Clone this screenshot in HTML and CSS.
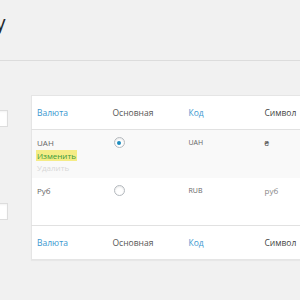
FILE: index.html
```html
<!DOCTYPE html>
<html lang="ru">
<head>
<meta charset="utf-8">
<link rel="stylesheet" href="styles.css">
</head>
<body>
<div class="head">
  <h1 class="title">Валюту</h1>
</div>
<div class="main">
  <div class="side">
    <div class="field"></div>
    <div class="field second"></div>
  </div>
  <table class="list">
    <colgroup>
      <col class="c">
      <col class="c">
      <col class="c">
      <col>
    </colgroup>
    <thead>
      <tr>
        <th class="link">Валюта</th>
        <th>Основная</th>
        <th class="link">Код</th>
        <th class="dark">Символ</th>
      </tr>
    </thead>
    <tbody>
      <tr class="alt">
        <td class="name">UAH
          <div class="actions">
            <span class="edit">Изменить</span>
            <span class="del">Удалить</span>
          </div>
        </td>
        <td><span class="radio checked"></span></td>
        <td class="code">UAH</td>
        <td class="sym">₴</td>
      </tr>
      <tr class="r2">
        <td class="name">Руб</td>
        <td><span class="radio"></span></td>
        <td class="code">RUB</td>
        <td class="sym light">руб</td>
      </tr>
    </tbody>
    <tfoot>
      <tr>
        <th class="link">Валюта</th>
        <th>Основная</th>
        <th class="link">Код</th>
        <th class="dark">Символ</th>
      </tr>
    </tfoot>
  </table>
</div>
</body>
</html>
```
FILE: styles.css
```css
html, body {
  margin: 0;
  padding: 0;
  background: #f1f1f1;
  font-family: "Open Sans", "Liberation Sans", sans-serif;
  overflow: hidden;
  height: 300px;
}
.head {
  display: flex;
  height: 60px;
  border-bottom: 1px solid #dcdcdc;
  overflow: hidden;
}
.title {
  margin: 10px 0 0 -66px;
  font-size: 20px;
  font-weight: 400;
  color: #23282d;
  white-space: nowrap;
  line-height: 26px;
}
.main {
  display: flex;
  align-items: flex-start;
  padding-top: 34px;
}
.side {
  width: 8px;
  display: flex;
  flex-direction: column;
  align-items: flex-end;
  padding-top: 15px;
  margin-right: 23px;
  flex: none;
  overflow: hidden;
}
.field {
  width: 150px;
  height: 15px;
  flex: none;
  background: #fff;
  border: 1px solid #dddddd;
  box-shadow: inset 0 1px 2px rgba(0,0,0,.05);
}
.field.second {
  margin-top: 76px;
}
.list {
  border-collapse: collapse;
  background: #fff;
  border: 1px solid #e5e5e5;
  border-right: 0;
  box-shadow: 0 1px 1px rgba(0,0,0,.04);
  flex: none;
  table-layout: fixed;
  width: 269px;
}
.list col.c {
  width: 76px;
}
.list th, .list td {
  text-align: left;
  padding: 0 5px;
  vertical-align: top;
  font-weight: 400;
  white-space: nowrap;
}
.list th {
  font-size: 8.5px;
  color: #555;
  height: 33px;
  vertical-align: middle;
}
.list thead th {
  border-bottom: 1px solid #e1e1e1;
}
.list tfoot th {
  border-top: 1px solid #e1e1e1;
}
.list th.link { color: #3b97cf; }
.list th.dark { color: #444; }
.list td {
  font-size: 8px;
  color: #777;
  padding-top: 7px;
  line-height: 12px;
}
.list tr.alt td {
  background: #f9f9f9;
  height: 41px;
}
.list tr.r2 td {
  height: 40px;
}
.list td.name { font-size: 8px; color: #666; }
.list td.code { font-size: 7px; color: #666; }
.list td.sym { font-size: 8px; color: #444; }
.list td.sym.light { color: #888; }
.actions {
  display: flex;
  flex-direction: column;
  align-items: flex-start;
  margin-top: 1px;
}
.edit {
  background: #f5ec86;
  color: #3a9a3a;
  padding: 0 1px;
  margin-left: -1px;
  line-height: 11px;
}
.del {
  color: #d8d8d8;
  line-height: 13px;
}
.radio {
  display: block;
  width: 9px;
  height: 9px;
  border: 1px solid #b4b9be;
  border-radius: 50%;
  background: #fff;
  box-shadow: inset 0 1px 2px rgba(0,0,0,.1);
  margin: 0 0 0 1px;
  position: relative;
}
.radio.checked::after {
  content: "";
  position: absolute;
  left: 2.5px;
  top: 2.5px;
  width: 4px;
  height: 4px;
  border-radius: 50%;
  background: #1e8cbe;
}
```
